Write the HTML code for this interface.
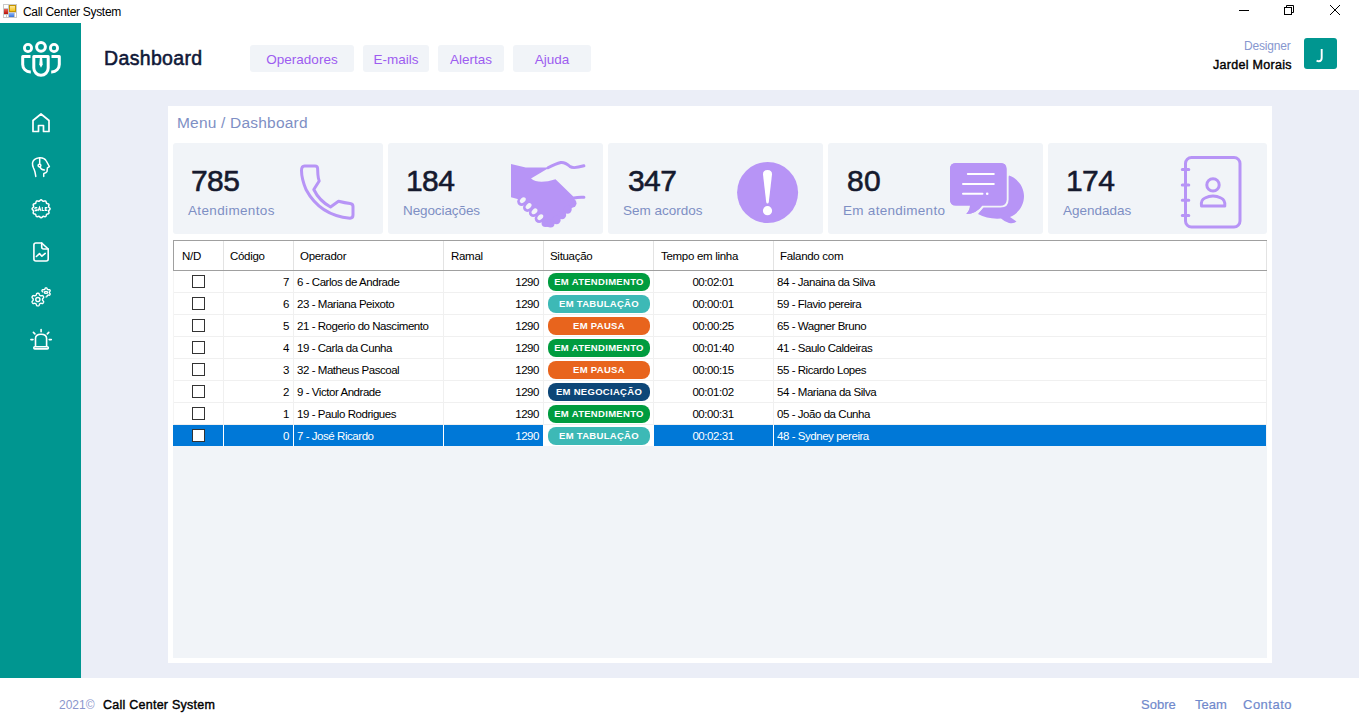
<!DOCTYPE html>
<html><head><meta charset="utf-8">
<style>
*{box-sizing:border-box;margin:0;padding:0}
html,body{width:1359px;height:727px;overflow:hidden;background:#fff;font-family:"Liberation Sans",sans-serif;position:relative}
.a{position:absolute}
.t{white-space:nowrap;line-height:1}
#side{left:0;top:23px;width:81px;height:655px;background:#009690}
#hdr{left:81px;top:23px;width:1278px;height:67px;background:#fff}
#content{left:81px;top:90px;width:1278px;height:588px;background:#ebeef7}
#panel{left:168px;top:106px;width:1104px;height:557px;background:#fff}
#gridbg{left:173px;top:240px;width:1094px;height:418px;background:#f1f4f8}
.card{top:143px;height:91px;background:#f1f4f8;border-radius:3px}
.num{font-size:30px;letter-spacing:-0.6px;font-weight:400;-webkit-text-stroke:0.6px #161a2e;color:#161a2e;top:166px}
.lbl{font-size:13.5px;color:#7e8fc4;top:204px}
.nav{top:45px;height:27px;background:#f1f4f8;border-radius:3px;color:#9d5cf0;font-size:13.5px;text-align:center;line-height:27px;padding-top:1px}
.g{font-size:11.5px;letter-spacing:-0.45px;color:#000}
.gh{font-size:11.5px;letter-spacing:-0.3px;color:#000}
.badge{width:102px;height:18px;border-radius:8px;color:#fff;font-size:9.5px;font-weight:700;letter-spacing:0.3px;text-align:center;line-height:18px;white-space:nowrap}
.ic{fill:none;stroke:#fff;stroke-linecap:round;stroke-linejoin:round}
.pu{fill:none;stroke:#b794f6;stroke-linecap:round;stroke-linejoin:round}
</style></head><body>

<div id="side" class="a"></div>
<div id="hdr" class="a"></div>
<div id="content" class="a"></div>
<div id="panel" class="a"></div>
<div id="gridbg" class="a"></div>

<!-- title bar -->
<div class="a" style="left:3px;top:4px;width:14px;height:14px;background:#c9c9c9"></div>
<div class="a" style="left:4px;top:5px;width:4px;height:3px;background:#fff"></div>
<div class="a" style="left:4px;top:9px;width:4px;height:5px;background:linear-gradient(#e8625a,#b81208)"></div>
<div class="a" style="left:4px;top:15px;width:2px;height:2px;background:#fff"></div>
<div class="a" style="left:7px;top:15px;width:1px;height:2px;background:#fff"></div>
<div class="a" style="left:9px;top:5px;width:7px;height:7px;background:#c49400"></div>
<div class="a" style="left:10px;top:6px;width:5px;height:5px;background:linear-gradient(#ffe89a,#f5c21a)"></div>
<div class="a" style="left:9px;top:13px;width:5px;height:4px;background:linear-gradient(#8ab4f8,#3a72d8)"></div>
<div class="a" style="left:15px;top:13px;width:1px;height:4px;background:#fff"></div>
<div class="a t" style="left:23px;top:6px;font-size:12px;letter-spacing:-0.3px;color:#000">Call Center System</div>
<svg class="a" style="left:1230px;top:0" width="120" height="22" viewBox="1230 0 120 22">
<path d="M1239 10.5 H1249" stroke="#000" stroke-width="1"/>
<rect x="1284.5" y="7.5" width="7" height="7" fill="none" stroke="#000" stroke-width="1"/>
<path d="M1286.5 7.5 V5.5 H1293.5 V12.5 H1291.5" fill="none" stroke="#000" stroke-width="1"/>
<path d="M1330 5 L1340 15 M1340 5 L1330 15" stroke="#000" stroke-width="1"/>
</svg>

<!-- header -->
<div class="a t" style="left:104px;top:49px;font-size:19.5px;letter-spacing:0.35px;font-weight:400;-webkit-text-stroke:0.55px #101838;color:#101838">Dashboard</div>
<div class="a nav" style="left:250px;width:104px">Operadores</div>
<div class="a nav" style="left:363px;width:66px">E-mails</div>
<div class="a nav" style="left:438px;width:66px">Alertas</div>
<div class="a nav" style="left:513px;width:78px">Ajuda</div>
<div class="a t" style="left:1244px;top:40px;font-size:12px;letter-spacing:-0.2px;color:#8797cf">Designer</div>
<div class="a t" style="left:1213px;top:59px;font-size:12.5px;font-weight:400;-webkit-text-stroke:0.4px #000;letter-spacing:0.3px;color:#000">Jardel Morais</div>
<div class="a" style="left:1304px;top:38px;width:33px;height:31px;background:#009690;border-radius:3px"></div>
<svg class="a" style="left:1300px;top:40px" width="40" height="30" viewBox="1300 40 40 30"><path d="M1321.7 49.1 V58 Q1321.7 61.2 1318.8 61.2 Q1317.6 61.2 1316.6 60.5" fill="none" stroke="#fff" stroke-width="1.9"/></svg>

<div class="a t" style="left:177px;top:115px;font-size:15.5px;letter-spacing:0.2px;color:#7e8fc4">Menu / Dashboard</div>

<!-- cards -->
<div class="a card" style="left:173px;width:210px"></div>
<div class="a card" style="left:388px;width:215px"></div>
<div class="a card" style="left:608px;width:215px"></div>
<div class="a card" style="left:828px;width:215px"></div>
<div class="a card" style="left:1048px;width:219px"></div>

<div class="a t num" style="left:191px">785</div>
<div class="a t lbl" style="left:188px;letter-spacing:0.35px">Atendimentos</div>
<div class="a t num" style="left:406px">184</div>
<div class="a t lbl" style="left:403px;letter-spacing:-0.1px">Negociações</div>
<div class="a t num" style="left:628px">347</div>
<div class="a t lbl" style="left:623px">Sem acordos</div>
<div class="a t num" style="left:847px;letter-spacing:0.3px">80</div>
<div class="a t lbl" style="left:843px;letter-spacing:0.28px">Em atendimento</div>
<div class="a t num" style="left:1066px">174</div>
<div class="a t lbl" style="left:1063px">Agendadas</div>

<div class="a" style="left:173px;top:240px;width:1094px;height:31px;background:#fff;border:1px solid #a0a0a0;border-right:none"></div>
<div class="a" style="left:173px;top:240px;width:1094px;height:1px;background:#a0a0a0"></div>
<div class="a" style="left:173px;top:270px;width:1094px;height:1px;background:#a0a0a0"></div>
<div class="a" style="left:1266px;top:241px;width:1px;height:29px;background:#e3e3e3"></div>
<div class="a" style="left:223px;top:241px;width:1px;height:29px;background:#e3e3e3"></div>
<div class="a" style="left:293px;top:241px;width:1px;height:29px;background:#e3e3e3"></div>
<div class="a" style="left:443px;top:241px;width:1px;height:29px;background:#e3e3e3"></div>
<div class="a" style="left:543px;top:241px;width:1px;height:29px;background:#e3e3e3"></div>
<div class="a" style="left:653px;top:241px;width:1px;height:29px;background:#e3e3e3"></div>
<div class="a" style="left:773px;top:241px;width:1px;height:29px;background:#e3e3e3"></div>
<div class="a t gh" style="left:182px;top:251px">N/D</div>
<div class="a t gh" style="left:230px;top:251px">Código</div>
<div class="a t gh" style="left:300px;top:251px">Operador</div>
<div class="a t gh" style="left:451px;top:251px">Ramal</div>
<div class="a t gh" style="left:550px;top:251px">Situação</div>
<div class="a t gh" style="left:661px;top:251px">Tempo em linha</div>
<div class="a t gh" style="left:780px;top:251px">Falando com</div>
<div class="a" style="left:173px;top:271px;width:1094px;height:22px;background:#fff"></div>
<div class="a" style="left:173px;top:292px;width:1094px;height:1px;background:#f0f0f0"></div>
<div class="a" style="left:173px;top:271px;width:1px;height:22px;background:#f4f4f4"></div>
<div class="a" style="left:1266px;top:271px;width:1px;height:22px;background:#f0f0f0"></div>
<div class="a" style="left:223px;top:271px;width:1px;height:22px;background:#f0f0f0"></div>
<div class="a" style="left:293px;top:271px;width:1px;height:22px;background:#f0f0f0"></div>
<div class="a" style="left:443px;top:271px;width:1px;height:22px;background:#f0f0f0"></div>
<div class="a" style="left:543px;top:271px;width:1px;height:22px;background:#f0f0f0"></div>
<div class="a" style="left:653px;top:271px;width:1px;height:22px;background:#f0f0f0"></div>
<div class="a" style="left:773px;top:271px;width:1px;height:22px;background:#f0f0f0"></div>
<div class="a" style="left:192px;top:275px;width:13px;height:13px;border:1px solid #333;background:#fff"></div>
<div class="a t g" style="left:223px;width:66px;text-align:right;top:277px;color:#000">7</div>
<div class="a t g" style="left:297px;top:277px;color:#000">6 - Carlos de Andrade</div>
<div class="a t g" style="left:443px;width:96px;text-align:right;top:277px;color:#000">1290</div>
<div class="a badge" style="left:548px;top:273px;background:#009c3f">EM ATENDIMENTO</div>
<div class="a t g" style="left:653px;width:120px;text-align:center;top:277px;color:#000">00:02:01</div>
<div class="a t g" style="left:777px;top:277px;color:#000">84 - Janaina da Silva</div>
<div class="a" style="left:173px;top:293px;width:1094px;height:22px;background:#fff"></div>
<div class="a" style="left:173px;top:314px;width:1094px;height:1px;background:#f0f0f0"></div>
<div class="a" style="left:173px;top:293px;width:1px;height:22px;background:#f4f4f4"></div>
<div class="a" style="left:1266px;top:293px;width:1px;height:22px;background:#f0f0f0"></div>
<div class="a" style="left:223px;top:293px;width:1px;height:22px;background:#f0f0f0"></div>
<div class="a" style="left:293px;top:293px;width:1px;height:22px;background:#f0f0f0"></div>
<div class="a" style="left:443px;top:293px;width:1px;height:22px;background:#f0f0f0"></div>
<div class="a" style="left:543px;top:293px;width:1px;height:22px;background:#f0f0f0"></div>
<div class="a" style="left:653px;top:293px;width:1px;height:22px;background:#f0f0f0"></div>
<div class="a" style="left:773px;top:293px;width:1px;height:22px;background:#f0f0f0"></div>
<div class="a" style="left:192px;top:297px;width:13px;height:13px;border:1px solid #333;background:#fff"></div>
<div class="a t g" style="left:223px;width:66px;text-align:right;top:299px;color:#000">6</div>
<div class="a t g" style="left:297px;top:299px;color:#000">23 - Mariana Peixoto</div>
<div class="a t g" style="left:443px;width:96px;text-align:right;top:299px;color:#000">1290</div>
<div class="a badge" style="left:548px;top:295px;background:#3db9b6">EM TABULAÇÃO</div>
<div class="a t g" style="left:653px;width:120px;text-align:center;top:299px;color:#000">00:00:01</div>
<div class="a t g" style="left:777px;top:299px;color:#000">59 - Flavio pereira</div>
<div class="a" style="left:173px;top:315px;width:1094px;height:22px;background:#fff"></div>
<div class="a" style="left:173px;top:336px;width:1094px;height:1px;background:#f0f0f0"></div>
<div class="a" style="left:173px;top:315px;width:1px;height:22px;background:#f4f4f4"></div>
<div class="a" style="left:1266px;top:315px;width:1px;height:22px;background:#f0f0f0"></div>
<div class="a" style="left:223px;top:315px;width:1px;height:22px;background:#f0f0f0"></div>
<div class="a" style="left:293px;top:315px;width:1px;height:22px;background:#f0f0f0"></div>
<div class="a" style="left:443px;top:315px;width:1px;height:22px;background:#f0f0f0"></div>
<div class="a" style="left:543px;top:315px;width:1px;height:22px;background:#f0f0f0"></div>
<div class="a" style="left:653px;top:315px;width:1px;height:22px;background:#f0f0f0"></div>
<div class="a" style="left:773px;top:315px;width:1px;height:22px;background:#f0f0f0"></div>
<div class="a" style="left:192px;top:319px;width:13px;height:13px;border:1px solid #333;background:#fff"></div>
<div class="a t g" style="left:223px;width:66px;text-align:right;top:321px;color:#000">5</div>
<div class="a t g" style="left:297px;top:321px;color:#000">21 - Rogerio do Nascimento</div>
<div class="a t g" style="left:443px;width:96px;text-align:right;top:321px;color:#000">1290</div>
<div class="a badge" style="left:548px;top:317px;background:#e8641d">EM PAUSA</div>
<div class="a t g" style="left:653px;width:120px;text-align:center;top:321px;color:#000">00:00:25</div>
<div class="a t g" style="left:777px;top:321px;color:#000">65 - Wagner Bruno</div>
<div class="a" style="left:173px;top:337px;width:1094px;height:22px;background:#fff"></div>
<div class="a" style="left:173px;top:358px;width:1094px;height:1px;background:#f0f0f0"></div>
<div class="a" style="left:173px;top:337px;width:1px;height:22px;background:#f4f4f4"></div>
<div class="a" style="left:1266px;top:337px;width:1px;height:22px;background:#f0f0f0"></div>
<div class="a" style="left:223px;top:337px;width:1px;height:22px;background:#f0f0f0"></div>
<div class="a" style="left:293px;top:337px;width:1px;height:22px;background:#f0f0f0"></div>
<div class="a" style="left:443px;top:337px;width:1px;height:22px;background:#f0f0f0"></div>
<div class="a" style="left:543px;top:337px;width:1px;height:22px;background:#f0f0f0"></div>
<div class="a" style="left:653px;top:337px;width:1px;height:22px;background:#f0f0f0"></div>
<div class="a" style="left:773px;top:337px;width:1px;height:22px;background:#f0f0f0"></div>
<div class="a" style="left:192px;top:341px;width:13px;height:13px;border:1px solid #333;background:#fff"></div>
<div class="a t g" style="left:223px;width:66px;text-align:right;top:343px;color:#000">4</div>
<div class="a t g" style="left:297px;top:343px;color:#000">19 - Carla da Cunha</div>
<div class="a t g" style="left:443px;width:96px;text-align:right;top:343px;color:#000">1290</div>
<div class="a badge" style="left:548px;top:339px;background:#009c3f">EM ATENDIMENTO</div>
<div class="a t g" style="left:653px;width:120px;text-align:center;top:343px;color:#000">00:01:40</div>
<div class="a t g" style="left:777px;top:343px;color:#000">41 - Saulo Caldeiras</div>
<div class="a" style="left:173px;top:359px;width:1094px;height:22px;background:#fff"></div>
<div class="a" style="left:173px;top:380px;width:1094px;height:1px;background:#f0f0f0"></div>
<div class="a" style="left:173px;top:359px;width:1px;height:22px;background:#f4f4f4"></div>
<div class="a" style="left:1266px;top:359px;width:1px;height:22px;background:#f0f0f0"></div>
<div class="a" style="left:223px;top:359px;width:1px;height:22px;background:#f0f0f0"></div>
<div class="a" style="left:293px;top:359px;width:1px;height:22px;background:#f0f0f0"></div>
<div class="a" style="left:443px;top:359px;width:1px;height:22px;background:#f0f0f0"></div>
<div class="a" style="left:543px;top:359px;width:1px;height:22px;background:#f0f0f0"></div>
<div class="a" style="left:653px;top:359px;width:1px;height:22px;background:#f0f0f0"></div>
<div class="a" style="left:773px;top:359px;width:1px;height:22px;background:#f0f0f0"></div>
<div class="a" style="left:192px;top:363px;width:13px;height:13px;border:1px solid #333;background:#fff"></div>
<div class="a t g" style="left:223px;width:66px;text-align:right;top:365px;color:#000">3</div>
<div class="a t g" style="left:297px;top:365px;color:#000">32 - Matheus Pascoal</div>
<div class="a t g" style="left:443px;width:96px;text-align:right;top:365px;color:#000">1290</div>
<div class="a badge" style="left:548px;top:361px;background:#e8641d">EM PAUSA</div>
<div class="a t g" style="left:653px;width:120px;text-align:center;top:365px;color:#000">00:00:15</div>
<div class="a t g" style="left:777px;top:365px;color:#000">55 - Ricardo Lopes</div>
<div class="a" style="left:173px;top:381px;width:1094px;height:22px;background:#fff"></div>
<div class="a" style="left:173px;top:402px;width:1094px;height:1px;background:#f0f0f0"></div>
<div class="a" style="left:173px;top:381px;width:1px;height:22px;background:#f4f4f4"></div>
<div class="a" style="left:1266px;top:381px;width:1px;height:22px;background:#f0f0f0"></div>
<div class="a" style="left:223px;top:381px;width:1px;height:22px;background:#f0f0f0"></div>
<div class="a" style="left:293px;top:381px;width:1px;height:22px;background:#f0f0f0"></div>
<div class="a" style="left:443px;top:381px;width:1px;height:22px;background:#f0f0f0"></div>
<div class="a" style="left:543px;top:381px;width:1px;height:22px;background:#f0f0f0"></div>
<div class="a" style="left:653px;top:381px;width:1px;height:22px;background:#f0f0f0"></div>
<div class="a" style="left:773px;top:381px;width:1px;height:22px;background:#f0f0f0"></div>
<div class="a" style="left:192px;top:385px;width:13px;height:13px;border:1px solid #333;background:#fff"></div>
<div class="a t g" style="left:223px;width:66px;text-align:right;top:387px;color:#000">2</div>
<div class="a t g" style="left:297px;top:387px;color:#000">9 - Victor Andrade</div>
<div class="a t g" style="left:443px;width:96px;text-align:right;top:387px;color:#000">1290</div>
<div class="a badge" style="left:548px;top:383px;background:#0d4677">EM NEGOCIAÇÃO</div>
<div class="a t g" style="left:653px;width:120px;text-align:center;top:387px;color:#000">00:01:02</div>
<div class="a t g" style="left:777px;top:387px;color:#000">54 - Mariana da Silva</div>
<div class="a" style="left:173px;top:403px;width:1094px;height:22px;background:#fff"></div>
<div class="a" style="left:173px;top:424px;width:1094px;height:1px;background:#f0f0f0"></div>
<div class="a" style="left:173px;top:403px;width:1px;height:22px;background:#f4f4f4"></div>
<div class="a" style="left:1266px;top:403px;width:1px;height:22px;background:#f0f0f0"></div>
<div class="a" style="left:223px;top:403px;width:1px;height:22px;background:#f0f0f0"></div>
<div class="a" style="left:293px;top:403px;width:1px;height:22px;background:#f0f0f0"></div>
<div class="a" style="left:443px;top:403px;width:1px;height:22px;background:#f0f0f0"></div>
<div class="a" style="left:543px;top:403px;width:1px;height:22px;background:#f0f0f0"></div>
<div class="a" style="left:653px;top:403px;width:1px;height:22px;background:#f0f0f0"></div>
<div class="a" style="left:773px;top:403px;width:1px;height:22px;background:#f0f0f0"></div>
<div class="a" style="left:192px;top:407px;width:13px;height:13px;border:1px solid #333;background:#fff"></div>
<div class="a t g" style="left:223px;width:66px;text-align:right;top:409px;color:#000">1</div>
<div class="a t g" style="left:297px;top:409px;color:#000">19 - Paulo Rodrigues</div>
<div class="a t g" style="left:443px;width:96px;text-align:right;top:409px;color:#000">1290</div>
<div class="a badge" style="left:548px;top:405px;background:#009c3f">EM ATENDIMENTO</div>
<div class="a t g" style="left:653px;width:120px;text-align:center;top:409px;color:#000">00:00:31</div>
<div class="a t g" style="left:777px;top:409px;color:#000">05 - João da Cunha</div>
<div class="a" style="left:173px;top:425px;width:1093px;height:21px;background:#0078d7"></div>
<div class="a" style="left:543px;top:425px;width:111px;height:21px;background:#fff"></div>
<div class="a" style="left:223px;top:425px;width:1px;height:21px;background:#fff"></div>
<div class="a" style="left:293px;top:425px;width:1px;height:21px;background:#fff"></div>
<div class="a" style="left:443px;top:425px;width:1px;height:21px;background:#fff"></div>
<div class="a" style="left:543px;top:425px;width:1px;height:21px;background:#ffffff"></div>
<div class="a" style="left:653px;top:425px;width:1px;height:21px;background:#fff"></div>
<div class="a" style="left:773px;top:425px;width:1px;height:21px;background:#fff"></div>
<div class="a" style="left:192px;top:429px;width:13px;height:13px;border:1px solid #333;background:#fff"></div>
<div class="a t g" style="left:223px;width:66px;text-align:right;top:431px;color:#fff">0</div>
<div class="a t g" style="left:297px;top:431px;color:#fff">7 - José Ricardo</div>
<div class="a t g" style="left:443px;width:96px;text-align:right;top:431px;color:#fff">1290</div>
<div class="a badge" style="left:548px;top:427px;background:#3db9b6">EM TABULAÇÃO</div>
<div class="a t g" style="left:653px;width:120px;text-align:center;top:431px;color:#fff">00:02:31</div>
<div class="a t g" style="left:777px;top:431px;color:#fff">48 - Sydney pereira</div>

<!-- footer -->
<div class="a t" style="left:59px;top:699px;font-size:12px;color:#8a96cc">2021©</div>
<div class="a t" style="left:103px;top:699px;font-size:12.5px;font-weight:400;-webkit-text-stroke:0.4px #000;letter-spacing:0.25px;color:#000">Call Center System</div>
<div class="a t" style="left:1141px;top:698px;font-size:13px;-webkit-text-stroke:0.2px #7089cc;color:#7089cc">Sobre</div>
<div class="a t" style="left:1195px;top:698px;font-size:13px;-webkit-text-stroke:0.2px #7089cc;color:#7089cc">Team</div>
<div class="a t" style="left:1243px;top:698px;font-size:13px;letter-spacing:0.5px;-webkit-text-stroke:0.2px #7089cc;color:#7089cc">Contato</div>

<!-- icons overlay -->
<svg class="a" style="left:0;top:0" width="1359" height="727" viewBox="0 0 1359 727">
 <!-- logo -->
 <g class="ic" stroke-width="3">
  <circle cx="41" cy="46.8" r="4.4"/>
  <circle cx="28" cy="48" r="3.6" stroke-width="2.8"/>
  <circle cx="54" cy="48" r="3.6" stroke-width="2.8"/>
  <path d="M33.8 56.6 H48.2 V68 A7.2 7.2 0 0 1 33.8 68 Z"/>
  <path d="M30.5 56.6 H22.7 V64.5 A7.5 7.5 0 0 0 30.2 72 H30.8" stroke-linecap="butt"/>
  <path d="M51.5 56.6 H59.3 V64.5 A7.5 7.5 0 0 1 51.8 72 H51.2" stroke-linecap="butt"/>
 </g>
 <path d="M39.9 57.5 L42.1 57.5 L42.7 64.5 L41 67.8 L39.3 64.5 Z" fill="#fff"/>
 <!-- home -->
 <path class="ic" stroke-width="1.7" d="M33 131.5 V120.5 L41 114 L49 120.5 V131.5 H43.5 V125.5 H38.5 V131.5 Z"/>
 <!-- head -->
 <g class="ic" stroke-width="1.5">
  <path d="M35.8 176.4 L35 172 Q34.3 169.5 33.5 168 Q32.3 165.5 32.5 163 Q33 158.5 39.5 157.7 Q44.5 157.5 46.3 161 L49.4 166.6 L47.4 167.8 L47 171.6 Q46.5 173 43.8 173.5 L43.7 176.4"/>
  <path d="M39.7 157.9 V164"/>
  <circle cx="39.5" cy="165.6" r="1.4"/>
  <path d="M40 167 Q40.8 169.6 44.4 170"/>
 </g>
 <!-- sale -->
 <path class="ic" stroke-width="1.5" d="M41.10 199.80 L41.68 199.99 L42.20 200.47 L42.66 200.98 L43.12 201.27 L43.66 201.25 L44.31 201.04 L45.00 200.89 L45.60 201.01 L46.00 201.46 L46.21 202.14 L46.36 202.80 L46.62 203.28 L47.10 203.54 L47.76 203.69 L48.44 203.90 L48.89 204.30 L49.01 204.90 L48.86 205.59 L48.65 206.24 L48.63 206.78 L48.92 207.24 L49.43 207.70 L49.91 208.22 L50.10 208.80 L49.91 209.38 L49.43 209.90 L48.92 210.36 L48.63 210.82 L48.65 211.36 L48.86 212.01 L49.01 212.70 L48.89 213.30 L48.44 213.70 L47.76 213.91 L47.10 214.06 L46.62 214.32 L46.36 214.80 L46.21 215.46 L46.00 216.14 L45.60 216.59 L45.00 216.71 L44.31 216.56 L43.66 216.35 L43.12 216.33 L42.66 216.62 L42.20 217.13 L41.68 217.61 L41.10 217.80 L40.52 217.61 L40.00 217.13 L39.54 216.62 L39.08 216.33 L38.54 216.35 L37.89 216.56 L37.20 216.71 L36.60 216.59 L36.20 216.14 L35.99 215.46 L35.84 214.80 L35.58 214.32 L35.10 214.06 L34.44 213.91 L33.76 213.70 L33.31 213.30 L33.19 212.70 L33.34 212.01 L33.55 211.36 L33.57 210.82 L33.28 210.36 L32.77 209.90 L32.29 209.38 L32.10 208.80 L32.29 208.22 L32.77 207.70 L33.28 207.24 L33.57 206.78 L33.55 206.24 L33.34 205.59 L33.19 204.90 L33.31 204.30 L33.76 203.90 L34.44 203.69 L35.10 203.54 L35.58 203.28 L35.84 202.80 L35.99 202.14 L36.20 201.46 L36.60 201.01 L37.20 200.89 L37.89 201.04 L38.54 201.25 L39.08 201.27 L39.54 200.98 L40.00 200.47 L40.52 199.99 L41.10 199.80 Z"/>
 <path d="M37.3 207.5 H35.6 Q34.8 207.5 34.8 208.2 Q34.8 209 35.6 209 H36.4 Q37.2 209 37.2 209.8 Q37.2 210.6 36.4 210.6 H34.7 M38 211 L39.5 207 L41 211 M38.6 209.7 H40.4 M42.3 207 V210.5 H44.3 M47.4 207.5 H45.3 V210.5 H47.4 M45.3 209 H47.1" fill="none" stroke="#fff" stroke-width="1.05"/>
 <!-- report -->
 <g class="ic" stroke-width="1.6">
  <path d="M33.9 245 Q33.9 243 35.9 243 H41.7 L48.2 249 V259 Q48.2 261 46.2 261 H35.9 Q33.9 261 33.9 259 Z"/>
  <path d="M41.7 243 V247 Q41.7 249 43.7 249 H48.2"/>
  <path d="M36.4 256.5 L39.5 253.6 L41.9 256.2 L45.2 253.4"/>
 </g>
 <!-- gears -->
 <g class="ic" stroke-width="1.4">
  <path d="M42.50 299.55 L42.50 299.71 L42.51 299.88 L42.52 300.04 L42.55 300.21 L42.63 300.39 L42.79 300.60 L43.02 300.84 L43.30 301.11 L43.51 301.39 L43.62 301.65 L43.64 301.89 L43.61 302.11 L43.54 302.33 L43.45 302.53 L43.35 302.73 L43.23 302.91 L43.10 303.09 L42.95 303.26 L42.77 303.40 L42.56 303.50 L42.27 303.53 L41.93 303.49 L41.55 303.39 L41.23 303.30 L40.97 303.27 L40.77 303.29 L40.61 303.35 L40.46 303.42 L40.32 303.50 L40.18 303.58 L40.03 303.66 L39.90 303.74 L39.76 303.84 L39.63 303.95 L39.51 304.11 L39.41 304.35 L39.32 304.68 L39.22 305.05 L39.09 305.37 L38.92 305.60 L38.72 305.74 L38.51 305.82 L38.29 305.87 L38.07 305.89 L37.85 305.90 L37.63 305.89 L37.41 305.87 L37.19 305.82 L36.98 305.74 L36.78 305.60 L36.61 305.37 L36.48 305.05 L36.38 304.68 L36.29 304.35 L36.19 304.11 L36.07 303.95 L35.94 303.84 L35.80 303.74 L35.67 303.66 L35.53 303.58 L35.38 303.50 L35.24 303.42 L35.09 303.35 L34.93 303.29 L34.73 303.27 L34.47 303.30 L34.15 303.39 L33.77 303.49 L33.43 303.53 L33.14 303.50 L32.93 303.40 L32.75 303.26 L32.60 303.09 L32.47 302.91 L32.35 302.73 L32.25 302.53 L32.16 302.33 L32.09 302.11 L32.06 301.89 L32.08 301.65 L32.19 301.39 L32.40 301.11 L32.68 300.84 L32.91 300.60 L33.07 300.39 L33.15 300.21 L33.18 300.04 L33.19 299.88 L33.20 299.71 L33.20 299.55 L33.20 299.39 L33.19 299.22 L33.18 299.06 L33.15 298.89 L33.07 298.71 L32.91 298.50 L32.68 298.26 L32.40 297.99 L32.19 297.71 L32.08 297.45 L32.06 297.21 L32.09 296.99 L32.16 296.77 L32.25 296.57 L32.35 296.38 L32.47 296.19 L32.60 296.01 L32.75 295.84 L32.93 295.70 L33.14 295.60 L33.43 295.57 L33.77 295.61 L34.15 295.71 L34.47 295.80 L34.73 295.83 L34.93 295.81 L35.09 295.75 L35.24 295.68 L35.38 295.60 L35.52 295.52 L35.67 295.44 L35.80 295.36 L35.94 295.26 L36.07 295.15 L36.19 294.99 L36.29 294.75 L36.38 294.42 L36.48 294.05 L36.61 293.73 L36.78 293.50 L36.98 293.36 L37.19 293.28 L37.41 293.23 L37.63 293.21 L37.85 293.20 L38.07 293.21 L38.29 293.23 L38.51 293.28 L38.72 293.36 L38.92 293.50 L39.09 293.73 L39.22 294.05 L39.32 294.42 L39.41 294.75 L39.51 294.99 L39.63 295.15 L39.76 295.26 L39.90 295.36 L40.03 295.44 L40.18 295.52 L40.32 295.60 L40.46 295.68 L40.61 295.75 L40.77 295.81 L40.97 295.83 L41.23 295.80 L41.55 295.71 L41.93 295.61 L42.27 295.57 L42.56 295.60 L42.77 295.70 L42.95 295.84 L43.10 296.01 L43.23 296.19 L43.35 296.38 L43.45 296.57 L43.54 296.77 L43.61 296.99 L43.64 297.21 L43.62 297.45 L43.51 297.71 L43.30 297.99 L43.02 298.26 L42.79 298.50 L42.63 298.71 L42.55 298.89 L42.52 299.06 L42.51 299.22 L42.50 299.39 L42.50 299.55 Z"/>
  <circle cx="37.85" cy="299.55" r="2.1"/>
  <path d="M42.67 291.80 L42.56 291.66 L42.39 291.49 L42.20 291.29 L42.05 291.10 L41.97 290.91 L41.95 290.74 L41.98 290.58 L42.03 290.43 L42.09 290.29 L42.16 290.15 L42.25 290.02 L42.34 289.89 L42.45 289.77 L42.57 289.67 L42.72 289.60 L42.92 289.58 L43.17 289.61 L43.43 289.68 L43.66 289.74 L43.84 289.76 L43.98 289.74 L44.10 289.70 L44.21 289.65 L44.31 289.60 L44.41 289.54 L44.51 289.48 L44.61 289.42 L44.70 289.36 L44.80 289.27 L44.88 289.16 L44.95 289.00 L45.02 288.76 L45.09 288.50 L45.18 288.27 L45.30 288.11 L45.44 288.01 L45.59 287.96 L45.75 287.92 L45.90 287.91 L46.06 287.90 L46.22 287.91 L46.37 287.92 L46.53 287.96 L46.68 288.01 L46.82 288.11 L46.94 288.27 L47.03 288.50 L47.10 288.76 L47.17 289.00 L47.24 289.16 L47.32 289.27 L47.42 289.36 L47.51 289.42 L47.61 289.48 L47.71 289.54 L47.81 289.60 L47.91 289.65 L48.02 289.70 L48.14 289.74 L48.28 289.76 L48.46 289.74 L48.69 289.68 L48.95 289.61 L49.20 289.58 L49.40 289.60 L49.55 289.67 L49.67 289.77 L49.78 289.89 L49.87 290.02 L49.96 290.15 L50.03 290.29 L50.09 290.43 L50.14 290.58 L50.17 290.74 L50.15 290.91 L50.07 291.10 L49.92 291.29 L49.73 291.49 L49.56 291.66 L49.45 291.80 L49.40 291.93 L49.37 292.05 L49.36 292.17 L49.36 292.28 L49.36 292.40 L49.36 292.52 L49.36 292.63 L49.37 292.75 L49.40 292.87 L49.45 293.00 L49.56 293.14 L49.73 293.31 L49.92 293.51 L50.07 293.70 L50.15 293.89 L50.17 294.06 L50.14 294.22 L50.09 294.37 L50.03 294.51 L49.96 294.65 L49.87 294.78 L49.78 294.91 L49.67 295.03 L49.55 295.13 L49.40 295.20 L49.20 295.22 L48.95 295.19 L48.69 295.12 L48.46 295.06 L48.28 295.04 L48.14 295.06 L48.02 295.10 L47.91 295.15 L47.81 295.20 L47.71 295.26 L47.61 295.32 L47.51 295.38 L47.42 295.44 L47.32 295.53 L47.24 295.64 L47.17 295.80 L47.10 296.04 L47.03 296.30 L46.94 296.53 L46.82 296.69 L46.68 296.79 L46.53 296.84 L46.37 296.88 L46.22 296.89 L46.06 296.90"/>
  <ellipse cx="46" cy="292.4" rx="1.7" ry="1"/>
 </g>
 <!-- siren -->
 <g class="ic" stroke-width="1.6">
  <rect x="33.8" y="346.7" width="14.5" height="2.2" rx="1"/>
  <path d="M35.5 346 V338.5 Q35.5 334.2 41 334.2 Q46.6 334.2 46.6 338.5 V346"/>
  <path d="M41.1 329.5 V331.8 M33.4 332.4 L34.9 333.9 M48.8 332.4 L47.3 333.9 M30.9 339.6 H33 M49.2 339.6 H51.3"/>
 </g>

 <!-- phone -->
 <g transform="translate(300,164.5)">
  <path class="pu" stroke-width="3" d="M4.5 1.5 H15 Q17.5 1.5 17.6 4 L17.9 10 Q18.2 14 19.2 16.5 L13.8 25 Q19 36 30.5 42.5 L38.5 36.8 Q45 38.5 50 39 Q53 39.3 53 42 V50.5 Q53 53.5 50 53.7 Q20 51 6 25 Q1.5 14 1.5 6 Q1.5 1.5 4.5 1.5 Z"/>
 </g>
 <!-- handshake -->
 <g transform="translate(511,161)" fill="#b794f6">
  <path d="M0 3 L14.7 6.5 H38.5 L20 17.6 Q27.6 23.8 44.5 18.2 L63.8 36.9 L62 46 L42 64 L36 66 L10 41 L6.5 38.1 L0 36.3 Z"/>
  <circle cx="10.6" cy="40.6" r="4.4"/>
  <circle cx="16.4" cy="46.5" r="4.4"/>
  <circle cx="22.3" cy="51.7" r="4.4"/>
  <circle cx="28.1" cy="57.6" r="4.4"/>
  <circle cx="34.5" cy="62" r="4"/>
  <circle cx="61.3" cy="42.3" r="4.2"/>
  <circle cx="56.5" cy="48.5" r="4.2"/>
  <circle cx="51" cy="54" r="4.2"/>
  <circle cx="45.5" cy="59" r="4.2"/>
  <circle cx="39.5" cy="62.5" r="4"/>
  <path d="M37 6.8 Q45 2.5 49.8 1.5 Q54 1 59 5.5 Q62 8 72.9 4.8" fill="none" stroke="#b794f6" stroke-width="3" stroke-linecap="round"/>
  <path d="M63 37 Q67 36 72.9 36.3" fill="none" stroke="#b794f6" stroke-width="3" stroke-linecap="round"/>
  <g fill="#f1f4f8">
   <ellipse cx="11.8" cy="39.2" rx="2.3" ry="3.4" transform="rotate(45 11.8 39.2)"/>
   <ellipse cx="17.6" cy="45.1" rx="2.3" ry="3.4" transform="rotate(45 17.6 45.1)"/>
   <ellipse cx="23.5" cy="50.3" rx="2.3" ry="3.4" transform="rotate(45 23.5 50.3)"/>
   <ellipse cx="29.3" cy="56.2" rx="2.3" ry="3.4" transform="rotate(45 29.3 56.2)"/>
  </g>
 </g>
 <!-- exclamation -->
 <circle cx="767.6" cy="192.5" r="30.5" fill="#b794f6"/>
 <path d="M763 174.5 Q762.8 170 767.5 170 Q772.2 170 772 174.5 L768.8 202 Q768.5 203.5 767.5 203.5 Q766.5 203.5 766.2 202 Z" fill="#fff"/>
 <circle cx="767.5" cy="210.7" r="4.6" fill="#fff"/>
 <!-- chat -->
 <g transform="translate(950,163)">
  <path d="M59 12.5 C68 15.5 74 24 74 33 C74 42 69 50 60 54 L66.5 58.5 Q64 61 59 60 Q55 59 51 55.5 Q38 56.5 28 51 Z" fill="#b794f6"/>
  <path d="M6 0 H50.5 Q56.5 0 56.5 6 V36.5 Q56.5 42.5 50.5 42.5 H32.3 Q26 51 16.3 51 Q20 47 20 42.5 H6 Q0 42.5 0 36.5 V6 Q0 0 6 0 Z" fill="#b794f6" stroke="#f1f4f8" stroke-width="4.2" paint-order="stroke"/>
  <path d="M6 0 H50.5 Q56.5 0 56.5 6 V36.5 Q56.5 42.5 50.5 42.5 H32.3 Q26 51 16.3 51 Q20 47 20 42.5 H6 Q0 42.5 0 36.5 V6 Q0 0 6 0 Z" fill="#b794f6"/>
  <path d="M17.8 11.1 H43.8 M13 21 H43.8 M13 30.7 H32.5" stroke="#fff" stroke-width="2" stroke-linecap="round"/>
  <circle cx="37.2" cy="30.7" r="1.3" fill="#fff"/>
 </g>
 <!-- address book -->
 <g class="pu" stroke-width="3">
  <rect x="1185.5" y="157.5" width="54.5" height="69.5" rx="6"/>
  <path d="M1182.3 169.6 H1188.8 M1182.3 184.9 H1188.8 M1182.3 200.3 H1188.8 M1182.3 215.5 H1188.8"/>
  <circle cx="1213" cy="184.9" r="6.2"/>
  <path d="M1201.5 206 Q1200.5 200 1205 198 Q1209 196 1213 196 Q1217 196 1221 198 Q1225.5 200 1224.8 206 Z"/>
 </g>
</svg>
</body></html>
